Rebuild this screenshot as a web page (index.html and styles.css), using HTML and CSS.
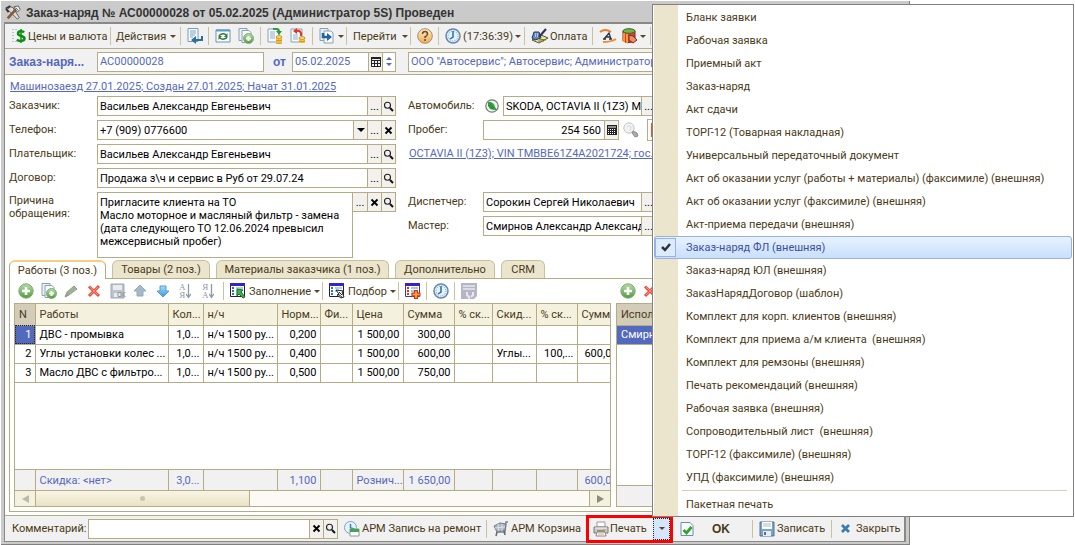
FILE: index.html
```html
<!DOCTYPE html>
<html lang="ru">
<head>
<meta charset="utf-8">
<title>Заказ-наряд № АС00000028</title>
<link rel="stylesheet" href="styles.css">
</head>
<body>
<svg class="sprite" aria-hidden="true">
  <defs>
    <linearGradient id="gGreen" x1="0" y1="0" x2="0" y2="1"><stop offset="0" stop-color="#b9dca4"/><stop offset="1" stop-color="#4c9c3c"/></linearGradient>
    <linearGradient id="gOrange" x1="0" y1="0" x2="0" y2="1"><stop offset="0" stop-color="#fdebc8"/><stop offset="1" stop-color="#f0ad55"/></linearGradient>
    <linearGradient id="gBlue" x1="0" y1="0" x2="0" y2="1"><stop offset="0" stop-color="#a6dcfa"/><stop offset="1" stop-color="#3f96dc"/></linearGradient>
  </defs>
  <symbol id="i-tools" viewBox="0 0 18 18"><path d="M3 5l3-3 3 1 7 11-2 2z" fill="#ddd" stroke="#555"/><path d="M1 4l5-3M1 4l3 4" stroke="#333" stroke-width="2" fill="none"/><path d="M13 4L3 15" stroke="#8a5a34" stroke-width="3"/><path d="M10 2l5-1 2 4-3 3z" fill="#eee" stroke="#555"/><path d="M12 3l3 3" stroke="#666"/></symbol>
  <symbol id="i-dollar" viewBox="0 0 14 16"><path d="M1 1v14M4 1v2M4 13v2" stroke="#7895b5" stroke-dasharray="1 2"/><path d="M12 4.500C11 3 6 2.500 6 5.500S12.500 7.500 12.500 10.500 6.500 13.500 5 11.500" fill="none" stroke="#0b8f12" stroke-width="2.500"/><path d="M9 1v14" stroke="#0b8f12" stroke-width="1.500"/></symbol>
  <symbol id="i-list" viewBox="0 0 16 16"><path d="M1 .5h10v13H1z" fill="#f7fafc" stroke="#7d9cb8"/><path d="M3 3h6M3 5h6M3 7h5M3 9h3" stroke="#7aa5c8"/><path d="M15 8v4H8" fill="none" stroke="#2c6d9f" stroke-width="2"/><path d="M9 8v8l-5-4z" fill="#2c6d9f"/></symbol>
  <symbol id="i-refresh" viewBox="0 0 16 16"><path d="M1 2h14v12H1z" fill="#fff" stroke="#6b93ae"/><path d="M1 1.500h14v2H1z" fill="#5b9cc0"/><path d="M4 8a4 3 0 0 1 7-1M12 9a4 3 0 0 1-7 1" fill="none" stroke="#2d7c3c" stroke-width="1.500"/><path d="M12.500 5v4H9zM3.500 12V8H7z" fill="#2d7c3c"/></symbol>
  <symbol id="i-copyadd" viewBox="0 0 16 16"><path d="M1 .5h8v12H1z" fill="#eef3f7" stroke="#8aa0b4"/><path d="M4 2.500h7l2 2v10H4z" fill="#f8fafc" stroke="#8aa0b4"/><circle cx="10.500" cy="10.500" r="5" fill="url(#gGreen)" stroke="#7fae78"/><path d="M10.500 8v5M8 10.500h5" stroke="#fff" stroke-width="2"/></symbol>
  <symbol id="i-post" viewBox="0 0 16 16"><path d="M1 1h11v13H1z" fill="#f7f9fb" stroke="#8ba0b2"/><path d="M3 4h5M3 6h5M3 8h5M3 10h5" stroke="#8db0cc"/><path d="M6 1q5-1 6 2" fill="none" stroke="#2b9a37" stroke-width="2"/><path d="M9 3h6l-3 4z" fill="#2b9a37"/><path d="M9 9v6h6V9z" fill="#f2c544"/><ellipse cx="12" cy="9" rx="3" ry="1.300" fill="#ffe9a0" stroke="#cc9322"/><path d="M9 12q3 2 6 0M9 15q3 1 6 0" fill="none" stroke="#cc9322"/></symbol>
  <symbol id="i-unpost" viewBox="0 0 16 16"><path d="M1 1h11v13H1z" fill="#f7f9fb" stroke="#8ba0b2"/><path d="M3 7h5M3 9h5M3 11h5" stroke="#8db0cc"/><path d="M6 3q6-1 5 5" fill="none" stroke="#e0301e" stroke-width="2"/><path d="M7 0v6L3 3z" fill="#e0301e"/><path d="M9 10v5h6v-5z" fill="#f2c544"/><ellipse cx="12" cy="10" rx="3" ry="1.300" fill="#ffe9a0" stroke="#cc9322"/><path d="M9 13q3 2 6 0" fill="none" stroke="#cc9322"/></symbol>
  <symbol id="i-based" viewBox="0 0 16 16"><path d="M1 .5h8v12H1z" fill="#e7eef4" stroke="#8aa0b4"/><path d="M5 3h7l2 2v10H5z" fill="#f8fafc" stroke="#8aa0b4"/><path d="M4 5v4h4" fill="none" stroke="#25639c" stroke-width="2.500"/><path d="M8 5l5 4-5 4z" fill="#25639c"/></symbol>
  <symbol id="i-help" viewBox="0 0 16 16"><circle cx="8" cy="8" r="7.300" fill="url(#gOrange)" stroke="#b08a60"/><path d="M5.500 6q0-2.500 2.500-2.500T10.500 6Q10.500 7.500 8 9v1" fill="none" stroke="#6f4c2c" stroke-width="1.500"/><circle cx="8" cy="12" r="1" fill="#6f4c2c"/></symbol>
  <symbol id="i-clock" viewBox="0 0 16 16"><circle cx="8" cy="8" r="7" fill="#e3f1fb" stroke="#6787a6" stroke-width="1.500"/><circle cx="8" cy="8" r="5" fill="none" stroke="#7892aa" stroke-dasharray="1 1.600"/><path d="M8 3v6l-3 2" fill="none" stroke="#2270b4" stroke-width="1.500"/></symbol>
  <symbol id="i-pay" viewBox="0 0 18 16"><path d="M1 12l9-5 7 3-9 5z" fill="#f3e69a" stroke="#55532c"/><path d="M3 4h5l2 6-6 2-3-2z" fill="#6688b8" stroke="#203a6a"/><path d="M4 6h4M4 8h5" stroke="#fff" stroke-dasharray="1 1"/><path d="M15 1L8 9" stroke="#2c3552" stroke-width="2"/><path d="M8 11l7 1M7 13l6 0" stroke="#7b7535"/></symbol>
  <symbol id="i-accent" viewBox="0 0 18 16"><path d="M1 4Q6 0 12 4" fill="none" stroke="#f07a26" stroke-width="2"/><path d="M4 14q8 0 13-3" fill="none" stroke="#ee8b3b" stroke-width="2"/><path d="M5 11l5-6 2 6M6 9h5M4 11h3M10 11h3" fill="none" stroke="#27364a" stroke-width="1.300"/></symbol>
  <symbol id="i-barrel" viewBox="0 0 18 16"><path d="M2 3v10q4 3 9 1l3-2V3z" fill="#e83c2c" stroke="#821e18"/><path d="M3 5v9M6 6v9" stroke="#ffb638" stroke-width="1.500"/><ellipse cx="8" cy="3" rx="6" ry="2.300" fill="#6fb647" stroke="#40622c"/><path d="M8 7l4 1 4 4-4 3-4-3z" fill="#ef8a6c" stroke="#64302a"/></symbol>
  <symbol id="i-mag" viewBox="0 0 11 11"><circle cx="4.500" cy="4.200" r="3" fill="none" stroke="#222" stroke-width="1.100"/><path d="M7 7l3 3" stroke="#111" stroke-width="2"/></symbol>
  <symbol id="i-x" viewBox="0 0 9 9"><path d="M1.500 1.500l6 6M7.500 1.500l-6 6" stroke="#000" stroke-width="1.800"/></symbol>
  <symbol id="i-cal" viewBox="0 0 10 10"><path d="M.5 .5h9v9h-9zM3.500 3v7M6.500 3v7M0 3.500h10M0 6.500h10" fill="none" stroke="#222"/><path d="M0 0h10v2H0z" fill="#222"/></symbol>
  <symbol id="i-calc" viewBox="0 0 10 10"><path d="M0 0h10v10H0z" fill="#222"/><path d="M1 2h8" stroke="#fff"/><path d="M1 4.500h8M1 6.500h8M1 8.500h8" stroke="#fff" stroke-dasharray="1 1"/></symbol>
  <symbol id="i-skoda" viewBox="0 0 14 14"><circle cx="7" cy="7" r="6.200" fill="#eef3ee" stroke="#747a76" stroke-width="1.200"/><path d="M3 3l3 0 3 2 1 3 2 3-3 0-4-1-2-3z" fill="#38a348"/><path d="M4 4l5 5M3 6l5 4" stroke="#257d36"/></symbol>
  <symbol id="i-bulb" viewBox="0 0 16 16"><circle cx="6" cy="6" r="5.200" fill="#f2f2f2" stroke="#c5c5c5"/><path d="M4 5q2-3 4 0L7 9" fill="none" stroke="#d8d8d8"/><path d="M10 9l4 2 1 3-3 1-3-4z" fill="#a9a9a9" stroke="#909090"/></symbol>
  <symbol id="i-plus" viewBox="0 0 16 16"><circle cx="8" cy="8" r="7.200" fill="url(#gGreen)" stroke="#82a878"/><path d="M8 4v8M4 8h8" stroke="#fff" stroke-width="2.600"/></symbol>
  <symbol id="i-pencil" viewBox="0 0 14 14"><path d="M1 13l2-5 7-6 3 3-8 6z" fill="#9fb294" stroke="#8fa284"/><path d="M1 13l1.500-4L5 11.500z" fill="#999"/></symbol>
  <symbol id="i-del" viewBox="0 0 14 14"><path d="M2 2.500l10 9.500M12 2L2 12" stroke="#e8513f" stroke-width="3"/><path d="M3 3l8 8M11 3l-8 8" stroke="#f6927f"/></symbol>
  <symbol id="i-saveok" viewBox="0 0 16 16"><path d="M1 1h13v14H1z" fill="#bcc3ca" stroke="#a1a9b1"/><path d="M3 2h9v5H3zM4 10h7v4H4z" fill="#e9ecef"/><path d="M8 9.500h3v4H8zM13 9v5M15.500 9L13 11.500l2.500 2.500" fill="none" stroke="#9199a1"/></symbol>
  <symbol id="i-up" viewBox="0 0 14 14"><path d="M7 1l6 6h-3v5H4V7H1z" fill="#a5b8c6" stroke="#94a9b9"/></symbol>
  <symbol id="i-down" viewBox="0 0 14 14"><path d="M7 13L1 7h3V2h6v5h3z" fill="url(#gBlue)" stroke="#5899d0"/></symbol>
  <symbol id="i-arrow" viewBox="0 0 5 16"><path d="M2.500 1v13M0 11l2.500 3.500L5 11" fill="none" stroke="#8f9aa4" stroke-width="1.300"/></symbol>
  <symbol id="i-fill" viewBox="0 0 16 16"><path d="M.5 .5h14v13H.5z" fill="#fff" stroke="#223"/><path d="M0 0h15v3H0z" fill="#3a22c8"/><path d="M2 5h2M2 8h2M2 11h2" stroke="#2670d8" stroke-width="2"/><path d="M6 5h7M6 8h5M6 11h3" stroke="#47a8e8"/><path d="M7 6l6 1-2 2 4 5-2 1-4-4-2 2z" fill="#39b54a" stroke="#1d6f2b"/></symbol>
  <symbol id="i-pick" viewBox="0 0 16 16"><path d="M.5 .5h14v13H.5z" fill="#fff" stroke="#223"/><path d="M0 0h15v3H0z" fill="#3a22c8"/><path d="M2 5h2M2 8h2M2 11h2" stroke="#2670d8" stroke-width="2"/><path d="M6 5h7M6 8h3" stroke="#47a8e8"/><path d="M7 7l8 1-2 1 2 5-3 1-4-3 2-1z" fill="#fff" stroke="#222"/><path d="M10 9l3 3M9 11l4 3" stroke="#222"/></symbol>
  <symbol id="i-addlist" viewBox="0 0 16 16"><path d="M.5 .5h14v13H.5z" fill="#fff" stroke="#446"/><path d="M0 0h15v3H0z" fill="#3a22c8"/><path d="M2 5h2M2 8h2M2 11h2" stroke="#e03020" stroke-width="2"/><path d="M6 5h7M6 8h5M6 11h3" stroke="#478fd8"/><path d="M11 7v9M6.500 11.500h9" stroke="#d8301c" stroke-width="4"/><path d="M11 8v7M7.500 11.500h7" stroke="#ffb23c" stroke-width="1.600"/></symbol>
  <symbol id="i-docgray" viewBox="0 0 16 16"><path d="M0 0h16v13l-3 3H0z" fill="#b5b5c5"/><path d="M2 3h12M2 6h12" stroke="#e8e8ee" stroke-width="1.500"/><path d="M6 9v3l2 2v2M12 9v3l-2 2" fill="none" stroke="#e8e8ee" stroke-width="2"/></symbol>
  <symbol id="i-clockcard" viewBox="0 0 16 16"><circle cx="6.500" cy="6.500" r="6" fill="#e6f2fb" stroke="#7da3c0"/><path d="M6.500 3v4l4 1" fill="none" stroke="#3b83b5" stroke-width="1.500"/><path d="M6 8h9v7H6z" fill="#fff" stroke="#8a9aa5"/><path d="M6 8h9v3H6z" fill="#43a647"/></symbol>
  <symbol id="i-cart" viewBox="0 0 16 16"><path d="M15 1h-2l-1 10H4" fill="none" stroke="#7b8490" stroke-width="1.500"/><path d="M1 5l6-3 6 1-1 6-8 2z" fill="#a9b5c1" stroke="#707a86"/><path d="M2 7l10-1M5 3l1 7M9 3v7" stroke="#dfe4e9"/><path d="M4 11l-1 4M11 10l1 4" stroke="#666" stroke-width="1.500"/></symbol>
  <symbol id="i-printer" viewBox="0 0 16 16"><path d="M4 1h8v5H4z" fill="#fff" stroke="#999"/><path d="M1 6h14v6H1z" fill="#c9cbc9" stroke="#777"/><path d="M2 7h12" stroke="#f3f3f3"/><path d="M4 10h8" stroke="#555"/><path d="M9 9h4" stroke="#d99b42"/><path d="M4 11h8l1 4H3z" fill="#fff" stroke="#888"/><path d="M5 13h6" stroke="#e0a860"/></symbol>
  <symbol id="i-ok" viewBox="0 0 13 16"><path d="M.5 1.500h9l3 3v10H.5z" fill="#f7fafc" stroke="#6c8dad"/><path d="M3 9l3 3 5-6" fill="none" stroke="#36a028" stroke-width="2.800"/></symbol>
  <symbol id="i-save" viewBox="0 0 16 16"><path d="M1 1h14v14H1z" fill="#7ba3c2" stroke="#4c7491"/><path d="M3 1h10v7H3z" fill="#fff"/><path d="M4 3h8M4 5h8" stroke="#a9bccb"/><path d="M4 10h8v5H4z" fill="#e6edf2"/><path d="M5 11h2v3H5z" fill="#4c7491"/></symbol>
  <symbol id="i-close" viewBox="0 0 11 11"><path d="M2 2l7 7M9 2L2 9" stroke="#3a7cb0" stroke-width="2.800"/></symbol>
  <symbol id="i-check" viewBox="0 0 10 10"><path d="M1 5l3 3 5-6" fill="none" stroke="#333" stroke-width="2.500"/></symbol>
</svg>

<main class="window">
  <header class="title">
    <svg class="i18"><use href="#i-tools"/></svg>
    <h1>Заказ-наряд № АС00000028 от 05.02.2025 (Администратор 5S) Проведен</h1>
  </header>

  <div class="frame">
    <div class="toolbar" role="toolbar">
      <button class="tb prices"><svg class="i16"><use href="#i-dollar"/></svg>Цены и валюта</button>
      <button class="tb actions">Действия<i class="caret"></i></button>
      <button class="tb one" aria-label="Список"><svg class="i16"><use href="#i-list"/></svg></button>
      <div class="tb two">
        <button aria-label="Обновить"><svg class="i16"><use href="#i-refresh"/></svg></button>
        <button aria-label="Скопировать"><svg class="i16"><use href="#i-copyadd"/></svg></button>
      </div>
      <div class="tb two">
        <button aria-label="Провести"><svg class="i16"><use href="#i-post"/></svg></button>
        <button aria-label="Отменить проведение"><svg class="i16"><use href="#i-unpost"/></svg></button>
      </div>
      <button class="tb based" aria-label="На основании"><svg class="i16"><use href="#i-based"/></svg><i class="caret"></i></button>
      <button class="tb goto">Перейти<i class="caret"></i></button>
      <button class="tb one" aria-label="Справка"><svg class="i16"><use href="#i-help"/></svg></button>
      <button class="tb time"><svg class="i16"><use href="#i-clock"/></svg>(17:36:39)<i class="caret"></i></button>
      <button class="tb pay"><svg class="i18"><use href="#i-pay"/></svg>Оплата</button>
      <div class="tb goods">
        <button aria-label="Шрифт"><svg class="i18"><use href="#i-accent"/></svg></button>
        <button aria-label="Масла"><svg class="i18"><use href="#i-barrel"/></svg><i class="caret"></i></button>
      </div>
    </div>

    <div class="dochead">
      <label class="strong" for="num">Заказ-наря...</label>
      <div class="field num"><input id="num" value="АС00000028"></div>
      <label class="strong from" for="date">от</label>
      <div class="field date"><input id="date" value="05.02.2025"><button aria-label="Календарь"><svg class="i10"><use href="#i-cal"/></svg></button><span class="spin"><button aria-label="Больше"></button><button aria-label="Меньше"></button></span></div>
      <div class="field org"><input aria-label="Организация" value="ООО &quot;Автосервис&quot;; Автосервис; Администратор 5S"></div>
    </div>

    <div class="content">
      <a class="history" href="#">Машинозаезд 27.01.2025; Создан 27.01.2025; Начат 31.01.2025</a>
      <div class="form">
        <div class="col">
          <label for="f1">Заказчик:</label>
          <div class="field"><input id="f1" value="Васильев Александр Евгеньевич"><button>...</button><button aria-label="Открыть"><svg class="i11"><use href="#i-mag"/></svg></button></div>
          <label for="f2">Телефон:</label>
          <div class="field"><input id="f2" value="+7 (909) 0776600"><button aria-label="Выбрать"><i class="tri"></i></button><button>...</button><button aria-label="Очистить"><svg class="i9"><use href="#i-x"/></svg></button></div>
          <label for="f3">Плательщик:</label>
          <div class="field"><input id="f3" value="Васильев Александр Евгеньевич"><button>...</button><button aria-label="Открыть"><svg class="i11"><use href="#i-mag"/></svg></button></div>
          <label for="f4">Договор:</label>
          <div class="field"><input id="f4" value="Продажа з\ч и сервис в Руб от 29.07.24"><button>...</button><button aria-label="Открыть"><svg class="i11"><use href="#i-mag"/></svg></button></div>
          <label class="tall" for="f5">Причина<br>обращения:</label>
          <div class="reason">
            <textarea id="f5">Пригласите клиента на ТО
Масло моторное и масляный фильтр - замена
(дата следующего ТО 12.06.2024 превысил
межсервисный пробег)</textarea>
            <div class="field"><button>...</button><button aria-label="Очистить"><svg class="i9"><use href="#i-x"/></svg></button><button aria-label="Открыть"><svg class="i11"><use href="#i-mag"/></svg></button></div>
          </div>
        </div>
        <div class="col right">
          <label for="g1">Автомобиль:</label>
          <div class="line"><svg class="i14"><use href="#i-skoda"/></svg><div class="field"><input id="g1" value="SKODA, OCTAVIA II (1Z3) МКПП"><button>...</button><button aria-label="Открыть"><svg class="i11"><use href="#i-mag"/></svg></button></div></div>
          <label for="g2">Пробег:</label>
          <div class="line"><div class="field mileage"><input id="g2" value="254 560"><button aria-label="Калькулятор"><svg class="i10"><use href="#i-calc"/></svg></button></div><svg class="i16"><use href="#i-bulb"/></svg><button class="alert" aria-label="Рекомендации"><i></i></button></div>
          <a class="carlink" href="#">OCTAVIA II (1Z3); VIN TMBBE61Z4A2021724; гос. номер</a>
          <label class="row5" for="g3">Диспетчер:</label>
          <div class="field row5"><input id="g3" value="Сорокин Сергей Николаевич"><button>...</button><button aria-label="Открыть"><svg class="i11"><use href="#i-mag"/></svg></button></div>
          <label class="row6" for="g4">Мастер:</label>
          <div class="field row6"><input id="g4" value="Смирнов Александр Александрович"><button>...</button><button aria-label="Открыть"><svg class="i11"><use href="#i-mag"/></svg></button></div>
        </div>
      </div>

      <div class="tabs" role="tablist">
        <button class="tab active" role="tab">Работы (3 поз.)</button>
        <button class="tab" role="tab">Товары (2 поз.)</button>
        <button class="tab wide" role="tab">Материалы заказчика (1 поз.)</button>
        <button class="tab" role="tab">Дополнительно</button>
        <button class="tab crm" role="tab">CRM</button>
      </div>

      <section class="panel">
        <div class="pane">
          <div class="gridbar">
            <button aria-label="Добавить"><svg class="i16"><use href="#i-plus"/></svg></button>
            <button aria-label="Скопировать"><svg class="i16"><use href="#i-copyadd"/></svg></button>
            <button aria-label="Изменить"><svg class="i14"><use href="#i-pencil"/></svg></button>
            <button aria-label="Удалить"><svg class="i14"><use href="#i-del"/></svg></button>
            <button aria-label="Сохранить"><svg class="i16"><use href="#i-saveok"/></svg></button>
            <button aria-label="Вверх"><svg class="i14"><use href="#i-up"/></svg></button>
            <button aria-label="Вниз"><svg class="i14"><use href="#i-down"/></svg></button>
            <button class="sort"><span>А<br>Я</span><svg class="i5"><use href="#i-arrow"/></svg></button>
            <button class="sort"><span>Я<br>А</span><svg class="i5"><use href="#i-arrow"/></svg></button>
            <button class="text fill"><svg class="i16"><use href="#i-fill"/></svg>Заполнение<i class="caret"></i></button>
            <button class="text pick"><svg class="i16"><use href="#i-pick"/></svg>Подбор<i class="caret"></i></button>
            <button class="text"><svg class="i16"><use href="#i-addlist"/></svg></button>
            <button class="text"><svg class="i16"><use href="#i-clock"/></svg></button>
            <button class="text"><svg class="i16"><use href="#i-docgray"/></svg></button>
          </div>
          <div class="gridbox">
            <div class="gridscroll">
            <table class="grid">
              <colgroup><col class="c20"><col class="c133"><col class="c35"><col class="c74"><col class="c43"><col class="c32"><col class="c51"><col class="c51"><col class="c38"><col class="c44"><col class="c41"><col class="c44"></colgroup>
              <thead><tr><th class="sel">N</th><th>Работы</th><th>Кол...</th><th>н/ч</th><th>Норм...</th><th>Фи...</th><th>Цена</th><th>Сумма</th><th>% ск...</th><th>Скид...</th><th>% ск...</th><th>Сумма</th></tr></thead>
              <tbody>
                <tr><td class="n cur">1</td><td>ДВС - промывка</td><td class="n">1,0...</td><td>н/ч 1500 ру...</td><td class="n">0,200</td><td></td><td class="n">1 500,00</td><td class="n">300,00</td><td></td><td></td><td></td><td></td></tr>
                <tr><td class="n">2</td><td>Углы установки колес ...</td><td class="n">1,0...</td><td>н/ч 1500 ру...</td><td class="n">0,400</td><td></td><td class="n">1 500,00</td><td class="n">600,00</td><td></td><td>Углы...</td><td class="n">100,...</td><td class="n">600,00</td></tr>
                <tr><td class="n">3</td><td>Масло ДВС с фильтро...</td><td class="n">1,0...</td><td>н/ч 1500 ру...</td><td class="n">0,500</td><td></td><td class="n">1 500,00</td><td class="n">750,00</td><td></td><td></td><td></td><td></td></tr>
              </tbody>
            </table>
            <div class="space"></div>
            <table class="grid totals">
              <colgroup><col class="c20"><col class="c133"><col class="c35"><col class="c74"><col class="c43"><col class="c32"><col class="c51"><col class="c51"><col class="c38"><col class="c44"><col class="c41"><col class="c44"></colgroup>
              <tbody><tr><td></td><td>Скидка: &lt;нет&gt;</td><td class="n">3,0...</td><td></td><td class="n">1,100</td><td></td><td>Рознич...</td><td class="n">1 650,00</td><td></td><td></td><td></td><td class="n">600,00</td></tr></tbody>
            </table>
            </div>
            <div class="scroll"><button aria-label="Влево"><i class="left"></i></button><span class="thumb"><i></i></span><button class="end" aria-label="Вправо"><i class="rightarrow"></i></button></div>
          </div>
        </div>
        <div class="pane">
          <div class="gridbar">
            <button aria-label="Добавить"><svg class="i16"><use href="#i-plus"/></svg></button>
            <button aria-label="Удалить"><svg class="i14"><use href="#i-del"/></svg></button>
          </div>
          <div class="gridbox">
            <table class="grid people"><thead><tr><th class="sel">Исполнитель</th></tr></thead><tbody><tr><td class="cur">Смирнов А. А.</td></tr></tbody></table>
            <div class="space"></div>
            <div class="blank"></div>
          </div>
        </div>
      </section>
    </div>

    <footer class="footer">
      <label for="comment">Комментарий:</label>
      <div class="field comment"><input id="comment"><button aria-label="Очистить"><svg class="i9"><use href="#i-x"/></svg></button><button aria-label="Открыть"><svg class="i11"><use href="#i-mag"/></svg></button></div>
      <button class="fb record"><svg class="i16"><use href="#i-clockcard"/></svg>АРМ Запись на ремонт</button>
      <button class="fb basket"><svg class="i16"><use href="#i-cart"/></svg>АРМ Корзина</button>
      <div class="print">
        <button class="printbtn"><svg class="i16"><use href="#i-printer"/></svg>Печать</button>
        <button class="drop" aria-label="Варианты печати" aria-expanded="true"><i class="caret"></i></button>
        <ul class="menu" role="menu">
          <li><button role="menuitem">Бланк заявки</button></li>
          <li><button role="menuitem">Рабочая заявка</button></li>
          <li><button role="menuitem">Приемный акт</button></li>
          <li><button role="menuitem">Заказ-наряд</button></li>
          <li><button role="menuitem">Акт сдачи</button></li>
          <li><button role="menuitem">ТОРГ-12 (Товарная накладная)</button></li>
          <li><button role="menuitem">Универсальный передаточный документ</button></li>
          <li><button role="menuitem">Акт об оказании услуг (работы + материалы) (факсимиле) (внешняя)</button></li>
          <li><button role="menuitem">Акт об оказании услуг (факсимиле) (внешняя)</button></li>
          <li><button role="menuitem">Акт-приема передачи (внешняя)</button></li>
          <li><button class="on" role="menuitem"><span class="tick"><svg class="i10"><use href="#i-check"/></svg></span>Заказ-наряд ФЛ (внешняя)</button></li>
          <li><button role="menuitem">Заказ-наряд ЮЛ (внешняя)</button></li>
          <li><button role="menuitem">ЗаказНарядДоговор (шаблон)</button></li>
          <li><button role="menuitem">Комплект для корп. клиентов (внешняя)</button></li>
          <li><button role="menuitem">Комплект для приема а/м клиента&nbsp; (внешняя)</button></li>
          <li><button role="menuitem">Комплект для ремзоны (внешняя)</button></li>
          <li><button role="menuitem">Печать рекомендаций (внешняя)</button></li>
          <li><button role="menuitem">Рабочая заявка (внешняя)</button></li>
          <li><button role="menuitem">Сопроводительный лист&nbsp; (внешняя)</button></li>
          <li><button role="menuitem">ТОРГ-12 (факсимиле) (внешняя)</button></li>
          <li><button role="menuitem">УПД (факсимиле) (внешняя)</button></li>
          <li class="sep"></li>
          <li><button role="menuitem">Пакетная печать</button></li>
        </ul>
      </div>
      <button class="fb ok"><svg class="i16"><use href="#i-ok"/></svg><b>OK</b></button>
      <button class="fb write"><svg class="i16"><use href="#i-save"/></svg>Записать</button>
      <button class="fb shut"><svg class="i11"><use href="#i-close"/></svg>Закрыть</button>
    </footer>
  </div>
</main>
</body>
</html>
```
FILE: styles.css
```css
* { box-sizing: border-box; }
body {
  margin: 0;
  background: #fff;
  color: #4a3a18;
  font: 11px/13px Roboto, "Liberation Sans", sans-serif;
}
button, input, textarea { font: inherit; color: inherit; margin: 0; padding: 0; border: 0; background: none; border-radius: 0; outline: 0; white-space: nowrap; }
svg { flex: none; display: block; }
.sprite { position: absolute; width: 0; height: 0; }
.i5 { width: 5px; height: 16px; }
.i9 { width: 9px; height: 9px; }
.i10 { width: 10px; height: 10px; }
.i11 { width: 11px; height: 11px; }
.i14 { width: 14px; height: 14px; }
.i16 { width: 16px; height: 16px; }
.i18 { width: 18px; height: 16px; }
.caret { border: 3px solid transparent; border-top-color: #5a4520; border-bottom: 0; }

.window {
  display: flex;
  flex-direction: column;
  min-height: calc(100vh - 1px);
  margin: 1px 165px 0 1px;
  padding: 0 3px 2px 3px;
  background: #cacaca;
  border-right: 1px solid #808080;
  border-bottom: 1px solid #808080;
}
.title { display: flex; align-items: center; gap: 4px; height: 21px; padding-top: 2px; }
.title h1 { margin: 0; font: bold 12px/20px "Liberation Sans", Arial, sans-serif; color: #333; white-space: nowrap; }
.frame { flex: 1; display: flex; flex-direction: column; border: 2px solid #8a8a84; border-left-width: 1px; border-bottom-width: 1px; background: #f1f1f1; min-width: 0; }

.toolbar { display: flex; height: 25px; padding: 3px 0; border-bottom: 1px solid #b5ab85; }
.tb { flex: none; display: flex; align-items: center; gap: 3px; padding: 0 6px; border-right: 1px solid #c9c2a0; }
.tb button { display: flex; align-items: center; gap: 3px; }
.prices { width: 106px; gap: 1px; padding-right: 0; }
.actions { width: 70px; gap: 4px; padding-left: 5px; padding-right: 0; }
.one { width: 28px; }
.two { width: 52px; gap: 7px; }
.based { width: 34px; }
.goto { width: 64px; gap: 5px; padding-right: 0; }
.time { width: 86px; gap: 2px; padding-right: 0; }
.pay { width: 68px; gap: 1px; padding-right: 0; }
.goods { width: 58px; gap: 4px; }
.goods button { gap: 1px; }

.field { display: flex; min-width: 0; height: 20px; background: #fff; border: 1px solid #b5ab85; }
.field input { flex: 1; width: 0; min-width: 0; padding-left: 2px; color: #000; }
.field button { flex: none; width: 14px; display: flex; align-items: center; justify-content: center; background: #f2f1ee; border-left: 1px solid #b5ab85; color: #000; }
.tri { border: 4px solid transparent; border-top-color: #000; border-bottom: 0; }

.dochead { display: flex; align-items: center; height: 26px; padding: 0 2px 0 4px; border-bottom: 1px solid #b5ab85; }
.strong { font: bold 12px/18px "Liberation Sans", Arial, sans-serif; color: #5568be; }
.dochead > .strong { width: 88px; white-space: nowrap; }
.dochead > .from { width: 28px; padding-left: 9px; }
.dochead input { color: #5568be; }
.num { width: 167px; }
.date { width: 104px; }
.dochead .spin { width: 13px; display: flex; flex-direction: column; align-items: center; justify-content: space-evenly; border-left: 1px solid #b5ab85; }
.dochead .spin button { width: 6px; height: 4px; border: 3px solid transparent; border-bottom-color: #5568be; border-top: 0; background: none; }
.dochead .spin button + button { border-top: 3px solid #5568be; border-bottom: 0; }
.org { flex: 1; margin-left: 12px; }

.content { flex: 1; display: flex; flex-direction: column; padding: 5px 3px 3px 4px; background: #fff; }
a { color: #5568be; text-decoration: underline; white-space: nowrap; }
.history { padding: 0 1px; line-height: 13px; align-self: flex-start; }
.form { display: grid; grid-template-columns: 387px 1fr; column-gap: 12px; margin-top: 3px; }
.col { display: grid; grid-template-columns: 88px 1fr; grid-template-rows: repeat(4, 20px); grid-auto-rows: auto; row-gap: 4px; align-content: start; }
.col label { line-height: 20px; }
.col .tall { line-height: 13px; padding-top: 2px; white-space: nowrap; }
.reason { display: flex; align-items: flex-start; height: 66px; }
.reason textarea { flex: 1; height: 66px; padding: 3px 0 3px 2px; line-height: 13px; color: #000; border: 1px solid #b5ab85; resize: none; overflow: hidden; }
.reason .field { border-left: 0; }
.reason .field button:first-child { border-left: 0; }
.right { grid-template-columns: 75px 187px; }
.line { display: flex; align-items: center; gap: 4px; padding-left: 2px; }
.line .field { flex: 1; }
.line .mileage { flex: none; width: 136px; margin-left: -2px; }
.mileage input { text-align: right; padding-right: 3px; }
.alert { width: 22px; height: 22px; margin-left: 4px; padding: 3px; border: 1px solid #b5ab85; }
.alert i { display: block; height: 14px; background: #f0501e; }
.carlink { grid-column: 1 / 3; line-height: 19px; padding-left: 1px; }
.row5 { grid-row: 5; }
.row6 { grid-row: 6; }

.tabs { display: flex; gap: 6px; margin-top: 2px; height: 18px; }
.tab { width: 98px; height: 18px; border: 1px solid #c9c09a; border-bottom: 0; border-radius: 6px 6px 0 0; background: #ebe5cd; }
.tab.active { width: 97px; height: 19px; background: #fff; border-color: #b5ab85; border-top: 2px solid #f6cf7e; position: relative; z-index: 1; }
.tab.wide { width: 173px; }
.tab:nth-child(4) { width: 100px; }
.tab.crm { width: 44px; }

.panel { flex: 1; display: grid; grid-template-columns: 597px 1fr; column-gap: 5px; padding: 0 4px; border: 1px solid #b5ab85; }
.pane { display: flex; flex-direction: column; min-width: 0; padding-bottom: 4px; }
.gridbar { display: flex; align-items: center; height: 24px; padding-left: 4px; }
.gridbar button { flex: none; display: flex; align-items: center; width: 23px; }
.gridbar .text { width: 28px; height: 18px; padding-left: 6px; gap: 3px; border-left: 1px solid #c9c2a0; }
.gridbar .fill { width: 99px; margin-left: -2px; }
.gridbar .pick { width: 76px; }
.sort span { font: 9px/8px "Liberation Serif", serif; color: #8f9aa4; }
.gridbox { flex: 1; display: flex; flex-direction: column; border: 1px solid #b5ab85; overflow: hidden; }
.gridscroll { flex: 1; display: flex; flex-direction: column; overflow: hidden; }
.grid { flex: none; table-layout: fixed; border-collapse: collapse; width: 606px; color: #000; }
.grid th, .grid td { height: 19px; padding: 0 3px 0 4px; border-right: 1px solid #b5ab85; border-bottom: 1px solid #b5ab85; text-align: left; white-space: nowrap; overflow: hidden; }
.grid th { height: 21px; font-weight: normal; background: #f4f1df; color: #4a3a18; }
.grid th.sel { background: #d2ccb8; }
.grid .n { text-align: right; }
.grid .cur { background: #5269bd; color: #fff; outline: 1px dotted #222; outline-offset: -1px; }
.grid.people { width: 100%; }
.people .cur { outline: 0; }
.totals { border-top: 1px solid #b5ab85; }
.totals td { height: 21px; background: #f1f1f1; color: #5568be; }
.space { flex: 1; }
.blank { height: 21px; border-top: 1px solid #b5ab85; background: #f1f1f1; }
.c20 { width: 20px; } .c32 { width: 32px; } .c35 { width: 35px; } .c38 { width: 38px; } .c41 { width: 41px; }
.c43 { width: 43px; } .c44 { width: 44px; } .c51 { width: 51px; } .c74 { width: 74px; } .c133 { width: 133px; }
.scroll { display: flex; height: 15px; background: #fbfaf4; }
.scroll button { width: 21px; display: flex; align-items: center; justify-content: center; background: #f4f1df; border-right: 1px solid #b5ab85; }
.left { border: 4px solid transparent; border-right: 7px solid #bcb8a6; border-left: 0; }
.rightarrow { border: 4px solid transparent; border-left: 7px solid #8e8b7c; border-right: 0; }
.thumb { width: 36%; display: flex; align-items: center; justify-content: center; background: linear-gradient(#f8f5e6, #e9e2c4); border-right: 1px solid #b5ab85; }
.thumb i { width: 5px; height: 5px; border-radius: 50%; background: #c9c4ae; }
.scroll .end { margin-left: auto; border-right: 0; border-left: 1px solid #b5ab85; }

.footer { display: flex; align-items: center; height: 26px; padding-left: 7px; border-top: 1px solid #b5ab85; white-space: nowrap; }
.footer label { flex: none; width: 76px; }
.comment { flex: none; width: 250px; }
.fb { flex: none; display: flex; align-items: center; gap: 2px; height: 18px; padding-left: 6px; border-right: 1px solid #c9c2a0; }
.record { width: 149px; }
.basket { width: 99px; border-right: 0; }
.print { position: relative; z-index: 1; display: flex; flex: none; width: 87px; height: 28px; border: 3px solid #f00; }
.printbtn { flex: 1; display: flex; align-items: center; gap: 1px; padding-left: 4px; }
.drop { width: 17px; display: flex; align-items: center; justify-content: center; background: #d5e5fb; border: 1px dotted #222; }
.ok { width: 80px; gap: 17px; }
.ok b { font: bold 12px/18px "Liberation Sans", Arial, sans-serif; }
.write { width: 79px; }
.shut { gap: 5px; padding-left: 8px; border-right: 0; }

.menu { position: absolute; z-index: -1; left: 63px; bottom: 23px; width: 422px; margin: 0; padding: 1px 1px 0; list-style: none; background: linear-gradient(90deg, #fff 1px, #ebe5cd 1px, #ebe5cd 25px, #fff 25px); border: 1px solid #808080; }
.menu button { display: flex; align-items: center; width: 100%; height: 23px; padding-left: 32px; text-align: left; white-space: pre; }
.menu .on { padding-left: 0; gap: 10px; color: #3c50a0; background: linear-gradient(#e8f2ff, #c8dffb); border: 1px solid #98b2e6; border-radius: 3px; }
.tick { width: 21px; height: 19px; display: flex; align-items: center; justify-content: center; border: 1px solid #98b2e6; background: #dcebff; }
.menu .sep { height: 1px; margin: 1px 5px 2px 28px; background: #d5d0bb; }
```
